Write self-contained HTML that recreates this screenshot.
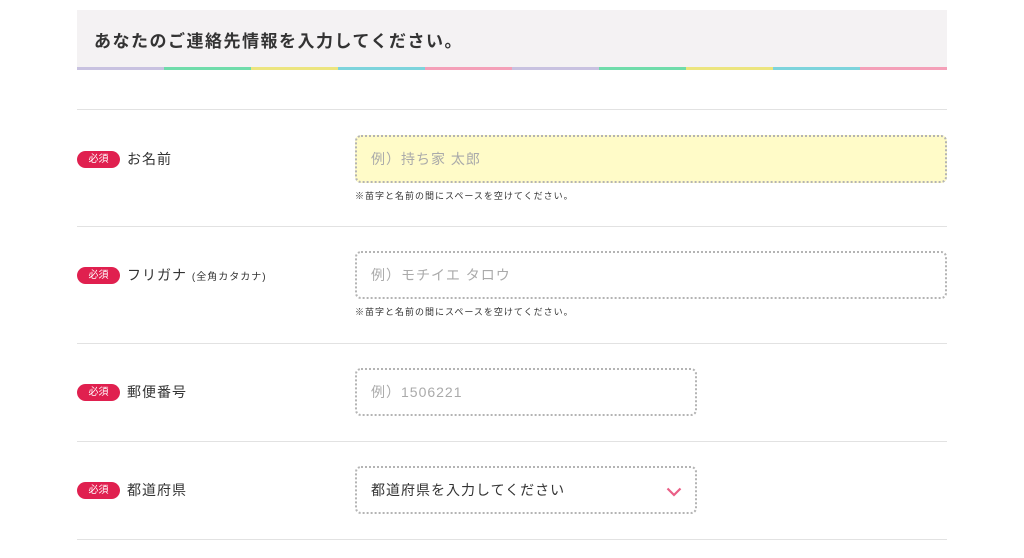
<!DOCTYPE html>
<html><head><meta charset="utf-8"><style>
body{margin:0;width:1024px;height:558px;background:#fff;font-family:"Liberation Sans","Noto Sans CJK JP",sans-serif;color:#333;position:relative;overflow:hidden}
.hd{position:absolute;left:77px;top:10px;width:870px;height:57px;background:#f4f2f3;font-size:17px;font-weight:bold;line-height:63px;letter-spacing:1.5px;box-sizing:border-box;padding-left:17px;color:#333}
.st{position:absolute;left:77px;top:67px;width:870px;height:3px;display:flex}
.st div{flex:1}
.ln{position:absolute;left:77px;width:870px;height:1px;background:#e2e2e2}
.bd{position:absolute;left:77px;width:43px;height:17px;border-radius:9px;background:#e0204f;color:#fff;font-size:10px;line-height:17px;text-align:center}
.lb{position:absolute;left:127px;font-size:14px;line-height:20px;letter-spacing:1px}
.lb small{font-size:10px;letter-spacing:1px}
.in{position:absolute;left:355px;height:48px;box-sizing:border-box;border:2px dotted #b4b4b4;border-radius:6px;font-size:14px;line-height:44px;padding-left:14px;color:#aaa;letter-spacing:1px}
.nt{position:absolute;left:355px;font-size:9px;color:#333;letter-spacing:1px}
</style></head><body>
<div class="hd">あなたのご連絡先情報を入力してください。</div>
<div class="st"><div style="background:#c8c2e0"></div><div style="background:#6fdcaa"></div><div style="background:#ece57e"></div><div style="background:#7dd4dc"></div><div style="background:#f4a0b8"></div><div style="background:#c8c2e0"></div><div style="background:#6fdcaa"></div><div style="background:#ece57e"></div><div style="background:#7dd4dc"></div><div style="background:#f4a0b8"></div></div>
<div class="ln" style="top:109px"></div>
<div class="ln" style="top:226px"></div>
<div class="ln" style="top:343px"></div>
<div class="ln" style="top:441px"></div>
<div class="ln" style="top:539px"></div>

<div class="bd" style="top:151px">必須</div><div class="lb" style="top:149px">お名前</div>
<div class="in" style="top:135px;width:592px;background:#fffbc8">例）持ち家 太郎</div>
<div class="nt" style="top:189px">※苗字と名前の間にスペースを空けてください。</div>

<div class="bd" style="top:267px">必須</div><div class="lb" style="top:265px">フリガナ <small>(全角カタカナ)</small></div>
<div class="in" style="top:251px;width:592px">例）モチイエ タロウ</div>
<div class="nt" style="top:305px">※苗字と名前の間にスペースを空けてください。</div>

<div class="bd" style="top:384px">必須</div><div class="lb" style="top:382px">郵便番号</div>
<div class="in" style="top:368px;width:342px">例）1506221</div>

<div class="bd" style="top:482px">必須</div><div class="lb" style="top:480px">都道府県</div>
<div class="in" style="top:466px;width:342px;color:#333">都道府県を入力してください
<svg style="position:absolute;right:13px;top:19px" width="16" height="10" viewBox="0 0 16 10"><path d="M1.5 1.5 L8 8 L14.5 1.5" fill="none" stroke="#ea5f86" stroke-width="2.2"/></svg></div>
</body></html>
